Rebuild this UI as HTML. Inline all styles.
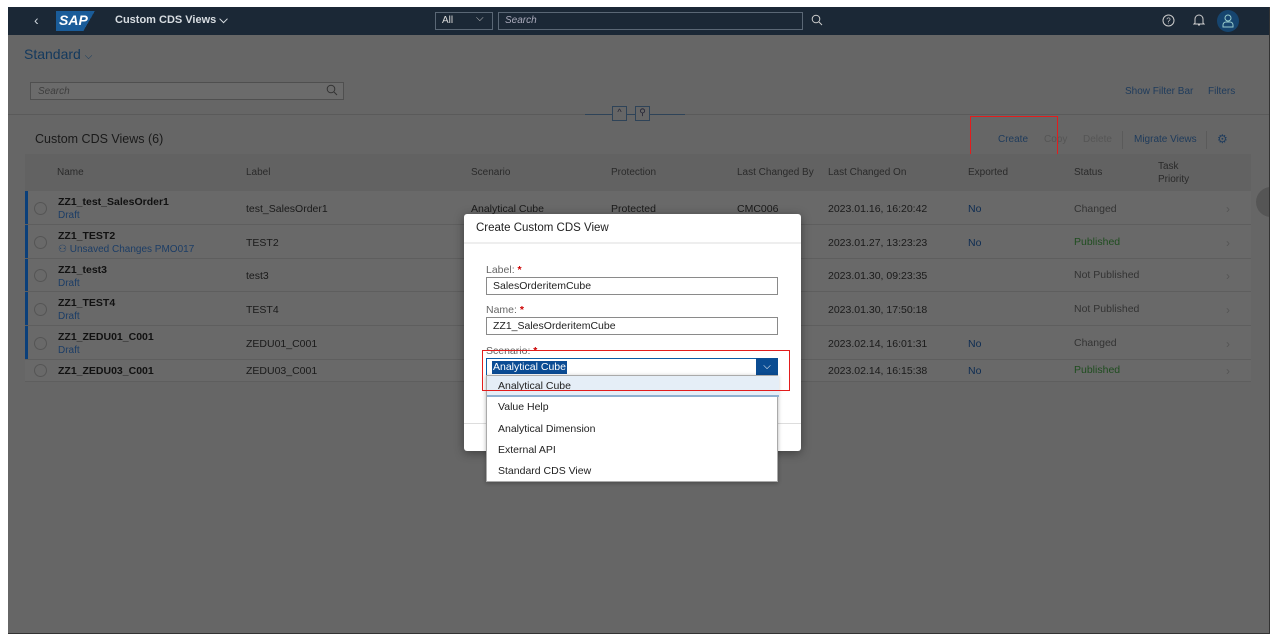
<!DOCTYPE html>
<html><head><meta charset="utf-8"><style>
*{box-sizing:border-box;margin:0;padding:0}
body{width:1280px;height:644px;background:#fff;font-family:"Liberation Sans",Arial,sans-serif;position:relative;overflow:hidden;font-size:11px}
.a{position:absolute}
#page{left:8px;top:7px;width:1262px;height:627px;background:#666;overflow:hidden;border-right:1px solid #333;border-bottom:1px solid #333}
#shell{left:0;top:0;width:1262px;height:28px;background:#1b2836}
.t{position:absolute;white-space:nowrap}
.row{position:absolute;left:17px;width:1226px;background:#696969;border-bottom:1px solid #5e5e5e}
.bar{position:absolute;left:0;top:0;width:3px;height:100%;background:#0a3f7a}
.rad{position:absolute;left:9px;width:13px;height:13px;border:1px solid #555;border-radius:50%}
.nm{font-weight:bold;color:#111;font-size:10.5px}
.dr{color:#1c3d66;font-size:10px}
.c{color:#1a1a1a;font-size:10.5px}
.chev{color:#555;font-size:12px}
.inp{position:absolute;left:22px;width:292px;height:18px;border:1px solid #8a8a8a;background:#fff;font-size:10.5px;padding:2px 6px;color:#222}
.lbl{position:absolute;left:22px;font-size:10.5px;color:#666}
.lbl b{color:#c00}
.li{position:absolute;left:0;width:292px;height:21px;padding:4px 11px;font-size:10.5px;color:#222}
</style></head><body>
<div id="page" class="a">
<div id="shell" class="a">
<div class="t" style="left:26px;top:5px;color:#cfd6dd;font-size:14px">‹</div>
<div class="a" style="left:48px;top:4px;width:44px;height:20px;background:linear-gradient(120deg,#1a5c99 70%,transparent 70%)"></div>
<div class="t" style="left:51px;top:5px;color:#fff;font-weight:bold;font-style:italic;font-size:14px">SAP</div>
<div class="t" style="left:107px;top:7px;color:#d8dde2;font-weight:bold;font-size:11px">Custom CDS Views ⌵</div>
<div class="a" style="left:427px;top:5px;width:58px;height:18px;border:1px solid #5a6775"></div>
<div class="t" style="left:434px;top:8px;color:#ddd;font-size:10px">All</div>
<div class="t" style="left:468px;top:6px;color:#ccc;font-size:10px">⌵</div>
<div class="a" style="left:490px;top:5px;width:305px;height:18px;border:1px solid #5a6775"></div>
<div class="t" style="left:497px;top:8px;color:#aab;font-size:10px;font-style:italic">Search</div>
<svg class="a" style="left:803px;top:7px" width="12" height="12"><circle cx="5" cy="5" r="3.8" stroke="#ccc" fill="none"/><path d="M8 8l3 3" stroke="#ccc"/></svg>
<svg class="a" style="left:1154px;top:7px" width="13" height="13"><circle cx="6.5" cy="6.5" r="5.5" stroke="#ccc" fill="none"/><text x="4.2" y="9.5" font-size="8" fill="#ccc" font-family="Liberation Sans">?</text></svg>
<svg class="a" style="left:1185px;top:6px" width="12" height="14"><path d="M2 10V6a4 4 0 0 1 8 0v4l1 1H1z M5 12h2" stroke="#ccc" fill="none"/></svg>
<div class="a" style="left:1209px;top:3px;width:22px;height:22px;border-radius:50%;background:#16456f"></div>
<svg class="a" style="left:1214px;top:7px" width="12" height="14"><circle cx="6" cy="4" r="3" stroke="#9cc" fill="none"/><path d="M1 13v-2a3 3 0 0 1 3-3h4a3 3 0 0 1 3 3v2z" stroke="#9cc" fill="none"/></svg>
</div>
<div class="t" style="left:16px;top:39px;color:#13395e;font-size:14px">Standard <span style="font-size:10px">⌵</span></div>
<div class="a" style="left:22px;top:75px;width:314px;height:18px;border:1px solid #4f4f4f;background:#6b6b6b"></div>
<div class="t" style="left:30px;top:79px;color:#3e3e3e;font-size:10px;font-style:italic">Search</div>
<svg class="a" style="left:318px;top:77px" width="12" height="12"><circle cx="5" cy="5" r="3.8" stroke="#333" fill="none"/><path d="M8 8l3 3" stroke="#333"/></svg>
<div class="t" style="left:1117px;top:79px;color:#1e3b5c;font-size:10px">Show Filter Bar</div>
<div class="t" style="left:1200px;top:79px;color:#1e3b5c;font-size:10px">Filters</div>
<div class="a" style="left:0;top:107px;width:1262px;height:1px;background:#5a5a5a"></div>
<div class="a" style="left:577px;top:107px;width:100px;height:1px;background:#2e4358"></div>
<div class="a" style="left:604px;top:99px;width:15px;height:15px;border:1px solid #2e4358;background:#666;color:#223;font-size:9px;text-align:center">^</div>
<div class="a" style="left:627px;top:99px;width:15px;height:15px;border:1px solid #2e4358;background:#666;color:#223;font-size:9px;text-align:center">⚲</div>
<div class="t" style="left:27px;top:125px;color:#1a1a1a;font-size:12.5px">Custom CDS Views (6)</div>
<div class="t" style="left:990px;top:127px;color:#1e3b5c;font-size:10px">Create</div>
<div class="t" style="left:1036px;top:127px;color:#555;font-size:10px">Copy</div>
<div class="t" style="left:1075px;top:127px;color:#555;font-size:10px">Delete</div>
<div class="a" style="left:1114px;top:124px;width:1px;height:18px;background:#5a5a5a"></div>
<div class="t" style="left:1126px;top:127px;color:#1e3b5c;font-size:10px">Migrate Views</div>
<div class="a" style="left:1198px;top:124px;width:1px;height:18px;background:#5a5a5a"></div>
<div class="t" style="left:1209px;top:125px;color:#1e3b5c;font-size:12px">⚙</div>
<div class="a" style="left:962px;top:109px;width:88px;height:41px;border:1.5px solid #e21d1d"></div>
<div class="a" style="left:17px;top:147px;width:1226px;height:37px;background:#626262"></div>
<div class="t c" style="left:49px;top:160px;color:#2a2a2a;font-size:10px">Name</div>
<div class="t c" style="left:238px;top:160px;color:#2a2a2a;font-size:10px">Label</div>
<div class="t c" style="left:463px;top:160px;color:#2a2a2a;font-size:10px">Scenario</div>
<div class="t c" style="left:603px;top:160px;color:#2a2a2a;font-size:10px">Protection</div>
<div class="t c" style="left:729px;top:160px;color:#2a2a2a;font-size:10px">Last Changed By</div>
<div class="t c" style="left:820px;top:160px;color:#2a2a2a;font-size:10px">Last Changed On</div>
<div class="t c" style="left:960px;top:160px;color:#2a2a2a;font-size:10px">Exported</div>
<div class="t c" style="left:1066px;top:160px;color:#2a2a2a;font-size:10px">Status</div>
<div class="t c" style="left:1150px;top:153px;color:#2a2a2a;font-size:10px;line-height:13px">Task<br>Priority</div>

<div class="row" style="top:184px;height:34px"><div class="bar"></div><div class="rad" style="top:11px"></div>
<div class="t nm" style="left:33px;top:5px">ZZ1_test_SalesOrder1</div><div class="t dr" style="left:33px;top:19px">Draft</div>
<div class="t c" style="left:221px;top:12px">test_SalesOrder1</div><div class="t c" style="left:446px;top:12px">Analytical Cube</div><div class="t c" style="left:586px;top:12px">Protected</div><div class="t c" style="left:712px;top:12px">CMC006</div>
<div class="t c" style="left:803px;top:12px">2023.01.16, 16:20:42</div><div class="t c" style="left:943px;top:12px;color:#0d2c52">No</div><div class="t c" style="left:1049px;top:12px;color:#333">Changed</div><div class="t chev" style="left:1201px;top:11px">›</div></div>
<div class="row" style="top:218px;height:34px"><div class="bar"></div><div class="rad" style="top:11px"></div>
<div class="t nm" style="left:33px;top:5px">ZZ1_TEST2</div><div class="t dr" style="left:33px;top:19px">⚇ Unsaved Changes PMO017</div>
<div class="t c" style="left:221px;top:12px">TEST2</div>
<div class="t c" style="left:803px;top:12px">2023.01.27, 13:23:23</div><div class="t c" style="left:943px;top:12px;color:#0d2c52">No</div><div class="t c" style="left:1049px;top:11px;color:#1f4d1f">Published</div><div class="t chev" style="left:1201px;top:11px">›</div></div>
<div class="row" style="top:252px;height:33px"><div class="bar"></div><div class="rad" style="top:10px"></div>
<div class="t nm" style="left:33px;top:5px">ZZ1_test3</div><div class="t dr" style="left:33px;top:19px">Draft</div>
<div class="t c" style="left:221px;top:11px">test3</div>
<div class="t c" style="left:803px;top:11px">2023.01.30, 09:23:35</div><div class="t c" style="left:1049px;top:10px;color:#333">Not Published</div><div class="t chev" style="left:1201px;top:10px">›</div></div>
<div class="row" style="top:285px;height:34px"><div class="bar"></div><div class="rad" style="top:11px"></div>
<div class="t nm" style="left:33px;top:5px">ZZ1_TEST4</div><div class="t dr" style="left:33px;top:19px">Draft</div>
<div class="t c" style="left:221px;top:12px">TEST4</div>
<div class="t c" style="left:803px;top:12px">2023.01.30, 17:50:18</div><div class="t c" style="left:1049px;top:11px;color:#333">Not Published</div><div class="t chev" style="left:1201px;top:11px">›</div></div>
<div class="row" style="top:319px;height:34px"><div class="bar"></div><div class="rad" style="top:11px"></div>
<div class="t nm" style="left:33px;top:5px">ZZ1_ZEDU01_C001</div><div class="t dr" style="left:33px;top:19px">Draft</div>
<div class="t c" style="left:221px;top:12px">ZEDU01_C001</div>
<div class="t c" style="left:803px;top:12px">2023.02.14, 16:01:31</div><div class="t c" style="left:943px;top:12px;color:#0d2c52">No</div><div class="t c" style="left:1049px;top:11px;color:#333">Changed</div><div class="t chev" style="left:1201px;top:11px">›</div></div>
<div class="row" style="top:353px;height:22px"><div class="rad" style="top:4px"></div>
<div class="t nm" style="left:33px;top:5px">ZZ1_ZEDU03_C001</div>
<div class="t c" style="left:221px;top:5px">ZEDU03_C001</div>
<div class="t c" style="left:803px;top:5px">2023.02.14, 16:15:38</div><div class="t c" style="left:943px;top:5px;color:#0d2c52">No</div><div class="t c" style="left:1049px;top:4px;color:#1f4d1f">Published</div><div class="t chev" style="left:1201px;top:4px">›</div></div>
<div class="a" style="left:1248px;top:180px;width:30px;height:30px;border-radius:50%;background:#555"></div>

<div class="a" style="left:456px;top:207px;width:337px;height:237px;background:#fff;border-radius:3px;box-shadow:0 2px 10px rgba(0,0,0,.4)">
<div class="t" style="left:12px;top:8px;font-size:11.5px;color:#222">Create Custom CDS View</div>
<div class="a" style="left:0;top:28px;width:337px;height:2px;background:#eee"></div>
<div class="lbl" style="top:50px">Label: <b>*</b></div>
<div class="inp" style="top:63px">SalesOrderitemCube</div>
<div class="lbl" style="top:90px">Name: <b>*</b></div>
<div class="inp" style="top:103px">ZZ1_SalesOrderitemCube</div>
<div class="lbl" style="top:131px">Scenario: <b>*</b></div>
<div class="a" style="left:22px;top:144px;width:292px;height:19px;border:1px solid #0a5ca8;background:#fff"></div>
<div class="a" style="left:28px;top:147px;height:13px;background:#0b4c94;color:#fff;font-size:10.5px;padding:0 1px;line-height:13px">Analytical Cube</div>
<div class="a" style="left:292px;top:144px;width:22px;height:19px;background:#0a4c92;color:#fff;text-align:center;font-size:10px;line-height:18px">⌵</div>
<div class="a" style="left:0;top:209px;width:337px;height:1px;background:#ddd"></div>
<div class="t" style="left:308px;top:218px;color:#0a5ca8;font-size:10px">l</div>
</div>
<div class="a" style="left:478px;top:368px;width:292px;height:107px;background:#fff;border:1px solid #aaa;box-shadow:0 1px 4px rgba(0,0,0,.3)">
<div class="li" style="top:0;background:#e5eef7;border-bottom:2px solid #8fb0d0">Analytical Cube</div>
<div class="li" style="top:21px">Value Help</div>
<div class="li" style="top:43px">Analytical Dimension</div>
<div class="li" style="top:64px">External API</div>
<div class="li" style="top:85px">Standard CDS View</div>
</div>
<div class="a" style="left:474px;top:343px;width:308px;height:41px;border:1.5px solid #e21d1d"></div>
</div>
</body></html>
